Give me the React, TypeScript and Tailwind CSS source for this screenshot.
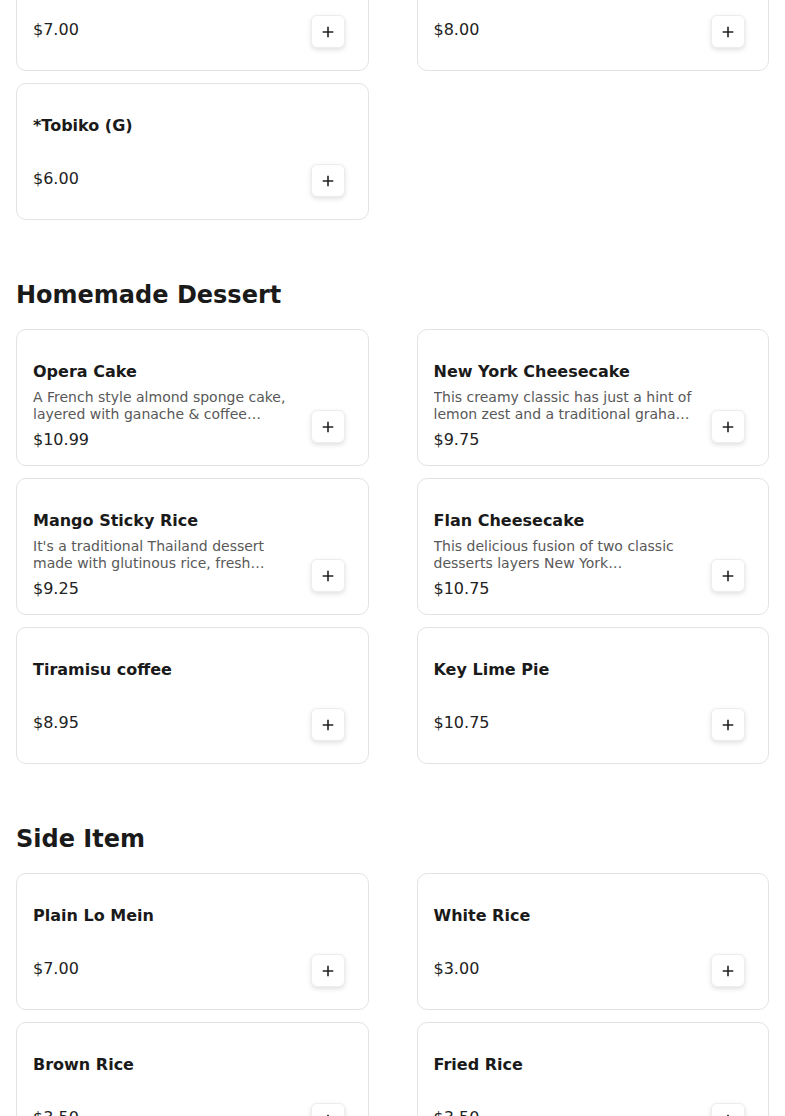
import React from "react";

type Item = { name: string; desc?: string; price: string };

const Plus = () => (
  <svg width="12" height="12" viewBox="0 0 12 12" fill="none">
    <path d="M6 1.5v9M1.5 6h9" stroke="#222" strokeWidth="1.6" strokeLinecap="square" />
  </svg>
);

const Card = ({ item }: { item: Item }) => (
  <div className="flex h-[137px] rounded-[10px] border border-[#e3e3e3] bg-white pl-4 pr-[23px]">
    <div className="flex min-w-0 flex-1 flex-col pt-[30px] pr-4">
      <div className="text-base font-bold leading-6 text-[#1a1a1a]">{item.name}</div>
      <div className="mt-[5px] mb-[5px] min-h-[19px]">
        {item.desc && (
          <p className="line-clamp-2 text-sm leading-[17px] text-[#595959]">{item.desc}</p>
        )}
      </div>
      <div className="text-base leading-6 text-[#222]">{item.price}</div>
    </div>
    <div className="flex flex-col justify-end pb-[22px]">
      <button className="flex h-[33px] w-[34px] items-center justify-center rounded-md border border-[#ededed] bg-white shadow-[0_2px_5px_rgba(0,0,0,0.12)]">
        <Plus />
      </button>
    </div>
  </div>
);

const Grid = ({ items }: { items: Item[] }) => (
  <div className="grid grid-cols-2 gap-x-12 gap-y-3">
    {items.map((it, i) => (
      <Card key={i} item={it} />
    ))}
  </div>
);

export default function App() {
  const top: Item[] = [
    { name: "*Ikura (G)", price: "$7.00" },
    { name: "*Uni (G)", price: "$8.00" },
    { name: "*Tobiko (G)", price: "$6.00" },
  ];
  const dessert: Item[] = [
    {
      name: "Opera Cake",
      desc: "A French style almond sponge cake, layered with ganache & coffee buttercream, topped with chocolate glaze.",
      price: "$10.99",
    },
    {
      name: "New York Cheesecake",
      desc: "This creamy classic has just a hint of lemon zest and a traditional graham cracker crust.",
      price: "$9.75",
    },
    {
      name: "Mango Sticky Rice",
      desc: "It's a traditional Thailand dessert made with glutinous rice, fresh mango and coconut milk.",
      price: "$9.25",
    },
    {
      name: "Flan Cheesecake",
      desc: "This delicious fusion of two classic desserts layers New York cheesecake, creamy flan and caramel.",
      price: "$10.75",
    },
    { name: "Tiramisu coffee", price: "$8.95" },
    { name: "Key Lime Pie", price: "$10.75" },
  ];
  const side: Item[] = [
    { name: "Plain Lo Mein", price: "$7.00" },
    { name: "White Rice", price: "$3.00" },
    { name: "Brown Rice", price: "$3.50" },
    { name: "Fried Rice", price: "$3.50" },
  ];
  return (
    <div
      className="h-[1116px] overflow-hidden bg-white px-4"
      style={{ fontFamily: '"DejaVu Sans", sans-serif' }}
    >
      <div className="-mt-[66px]">
        <Grid items={top} />
        <section className="mt-[59px]">
          <h2 className="mb-[18px] text-2xl font-bold leading-8 text-[#1a1a1a]">Homemade Dessert</h2>
          <Grid items={dessert} />
        </section>
        <section className="mt-[59px]">
          <h2 className="mb-[18px] text-2xl font-bold leading-8 text-[#1a1a1a]">Side Item</h2>
          <Grid items={side} />
        </section>
      </div>
    </div>
  );
}
